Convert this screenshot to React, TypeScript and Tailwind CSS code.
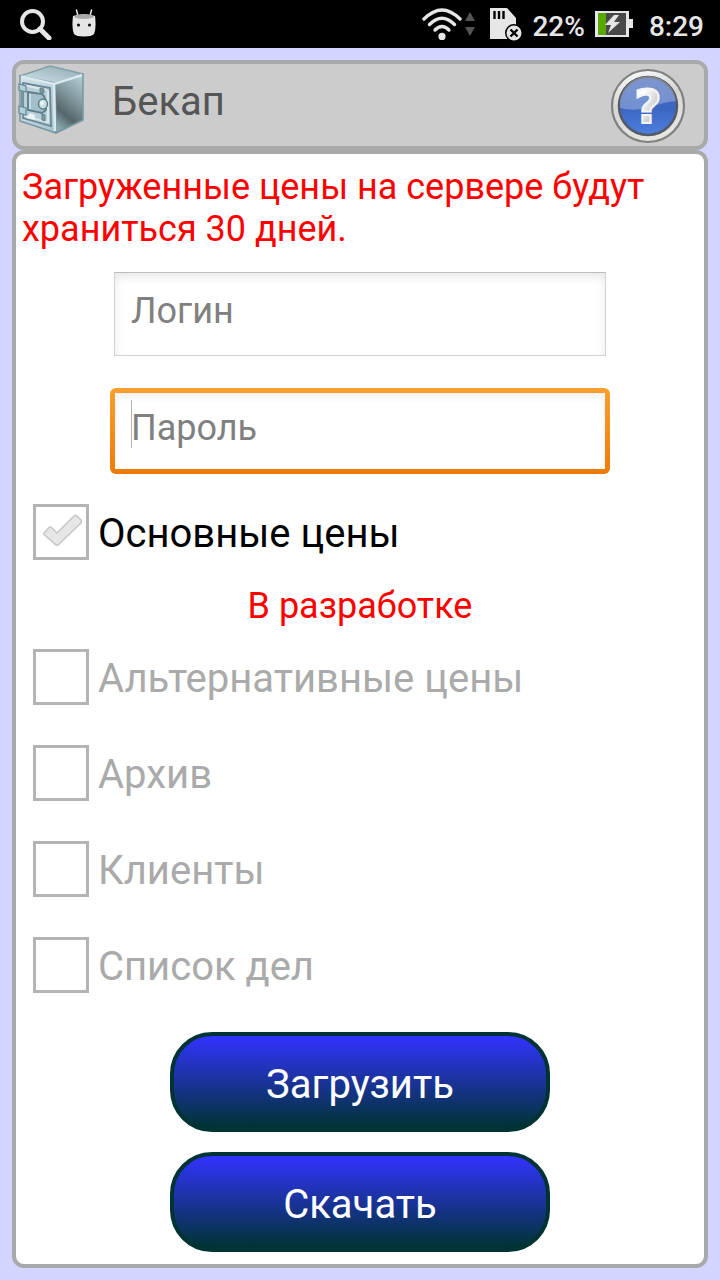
import { useState } from 'react';

interface PriceOption {
  id: string;
  label: string;
}

const upcomingOptions: PriceOption[] = [
  { id: 'alternative', label: 'Альтернативные цены' },
  { id: 'archive', label: 'Архив' },
  { id: 'clients', label: 'Клиенты' },
  { id: 'todo', label: 'Список дел' },
];

function StatusBar() {
  return (
    <div className="h-12 bg-black flex items-center justify-between pl-5 pr-4 text-[#e6e6e6]">
      <div className="flex items-center gap-5">
        <svg className="w-8 h-8" viewBox="0 0 32 32" fill="none" stroke="currentColor">
          <circle cx="12.5" cy="13.5" r="10.5" strokeWidth="4" />
          <path d="M20 21 L29 30" strokeWidth="5" strokeLinecap="round" />
        </svg>
        <svg className="w-6 h-8" viewBox="0 0 24 32">
          <path d="M6 8 L4.5 2 M18 8 L19.500 2" stroke="#e6e6e6" strokeWidth="1.500" strokeLinecap="round" />
          <path d="M1 8 Q12 5 23 8 Q24.500 20 22 26 Q20 28.500 12 28.500 Q4 28.500 2 26 Q-.5 20 1 8Z" fill="#e6e6e6" />
          <ellipse cx="12" cy="8.500" rx="10" ry="2.500" fill="#aaa" />
          <circle cx="6.500" cy="17" r="1.600" fill="#111" />
          <circle cx="17.500" cy="17" r="1.600" fill="#111" />
        </svg>
      </div>
      <div className="flex items-center">
        <svg className="w-[54px] h-8" viewBox="0 0 54 32" fill="none" stroke="#e6e6e6" strokeWidth="3.400" strokeLinecap="round">
          <path d="M2 11 Q20 -7 38 11" />
          <path d="M7.500 16.500 Q20 4 32.500 16.500" />
          <path d="M13 22 Q20 15 27 22" />
          <circle cx="20" cy="28.400" r="3.600" fill="#e6e6e6" stroke="none" />
          <path d="M43 13 L48 4 L53 13Z M43 19 L48 28 L53 19Z" fill="#555" stroke="none" />
        </svg>
        <svg className="w-8 h-[34px] ml-[14px]" viewBox="0 0 32 34">
          <path d="M0 1 H17 L26 11 V32 H0Z" fill="#e6e6e6" />
          <path d="M4.500 4 V12 M9 4 V12 M13.500 4 V12" stroke="#000" strokeWidth="2.400" />
          <circle cx="24" cy="26" r="9" fill="#000" />
          <circle cx="24" cy="26" r="7.500" fill="#e6e6e6" />
          <path d="M20.500 22.500 L27.500 29.500 M27.500 22.500 L20.500 29.500" stroke="#000" strokeWidth="2.400" />
        </svg>
        <span className="ml-[10px] pt-[6px] text-[28px] leading-8 font-medium">22%</span>
        <svg className="w-[38px] h-[26px] ml-[10px]" viewBox="0 0 38 26">
          <path d="M0 0 H34 V8 H38 V17 H34 V26 H0Z" fill="#e6e6e6" />
          <path d="M3 2 H31 V24 H3Z" fill="#484848" />
          <path d="M3 2 H11 V24 H3Z" fill="#59a800" />
          <path d="M19 4 L10 14 H16 L13 22 L25 11 H19 L24 4Z" fill="#e6e6e6" />
        </svg>
        <span className="ml-4 pt-[6px] text-[28px] leading-8 font-medium">8:29</span>
      </div>
    </div>
  );
}

function SafeIcon() {
  return (
    <svg className="w-[70px] h-[72px]" viewBox="0 0 70 72">
      <defs>
        <linearGradient id="safeTop" x1="0" y1="1" x2="1" y2="0">
          <stop offset="0" stopColor="#d3e4ea" />
          <stop offset="0.5" stopColor="#b0c6cd" />
          <stop offset="1" stopColor="#92abb3" />
        </linearGradient>
        <linearGradient id="safeSide" x1="0.8" y1="0" x2="0.4" y2="1">
          <stop offset="0" stopColor="#b0cbd1" />
          <stop offset="0.4" stopColor="#82999f" />
          <stop offset="0.75" stopColor="#54666b" />
          <stop offset="1" stopColor="#86a4ab" />
        </linearGradient>
        <linearGradient id="safeFront" x1="0" y1="0" x2="1" y2="1">
          <stop offset="0" stopColor="#d4e5ec" />
          <stop offset="1" stopColor="#a6c2cd" />
        </linearGradient>
      </defs>
      <path d="M3 12 L33 2 L66 10 L38 20Z" fill="url(#safeTop)" stroke="#84a0aa" strokeWidth="1.500" strokeLinejoin="round" />
      <path d="M38 19 L66 10 V56 L39 69Z" fill="url(#safeSide)" stroke="#7897a1" strokeWidth="1.500" strokeLinejoin="round" />
      <path d="M3 12 L38 19 L39 69 L3 57Z" fill="url(#safeFront)" stroke="#7896a2" strokeWidth="1.500" strokeLinejoin="round" />
      <path d="M4 12.500 L37 20 L65 11 M37 20 L38 67" fill="none" stroke="#dbeaf0" strokeWidth="2.500" />
      <path d="M6 19 L33 24 L34 62 L6 54Z" fill="#b9cfd8" stroke="#6b8894" strokeWidth="1.800" />
      <path d="M8 21.500 L30 26 M31 27 V59 M8 52 L30 58" fill="none" stroke="#dbe9ee" strokeWidth="1.800" />
      <path d="M11 28 L25 30 Q30 34 29 46 L25 49 L11 46Z" fill="#a5bfca" stroke="#5f7e8a" strokeWidth="1.800" />
      <path d="M13 30 V45" stroke="#c6dde6" strokeWidth="2" />
      <path d="M2 20 L9 22 V28 L2 26Z M2 42 L9 44 V51 L2 49Z" fill="#b5d0db" stroke="#668896" strokeWidth="1.300" />
      <path d="M5 27 V42" stroke="#7896a2" strokeWidth="2" />
      <ellipse cx="26" cy="40" rx="4.500" ry="5" fill="#c7dee7" stroke="#5f7e8a" strokeWidth="1.500" />
      <circle cx="25" cy="39" r="2" fill="#edf6f9" />
      <path d="M23 24 L27 25 V29 L23 28Z M25 50 L28 51 V57 L25 56Z" fill="#7d99a4" stroke="#62818d" />
      <path d="M9 54 L13 49 L18 51 V56Z" fill="#e8f3f6" />
    </svg>
  );
}

function HelpIcon() {
  return (
    <svg className="w-[76px] h-[76px]" viewBox="0 0 76 76">
      <defs>
        <linearGradient id="helpRing" x1="0" y1="0" x2="0.3" y2="1">
          <stop offset="0" stopColor="#ffffff" />
          <stop offset="0.5" stopColor="#d6d6d2" />
          <stop offset="1" stopColor="#e4e4e0" />
        </linearGradient>
        <linearGradient id="helpBlue" x1="0" y1="0" x2="0" y2="1">
          <stop offset="0" stopColor="#4a6dbb" />
          <stop offset="0.55" stopColor="#3c66c2" />
          <stop offset="1" stopColor="#4d80e0" />
        </linearGradient>
        <linearGradient id="helpMark" x1="0" y1="0" x2="1" y2="1">
          <stop offset="0.3" stopColor="#ffffff" />
          <stop offset="0.7" stopColor="#c4c4c4" />
          <stop offset="1" stopColor="#f0f0f0" />
        </linearGradient>
      </defs>
      <circle cx="38" cy="38" r="36" fill="url(#helpRing)" stroke="#808080" strokeWidth="2.200" />
      <circle cx="38" cy="38" r="29" fill="url(#helpBlue)" stroke="#555a66" strokeWidth="2.500" />
      <path d="M10 40 A28 28 0 0 1 66 33 Q54 34 40 39 Q24 44 10 40Z" fill="#fff" opacity="0.28" />
      <text
        x="38"
        y="55"
        textAnchor="middle"
        fontSize="47"
        fontWeight="700"
        fontFamily="DejaVu Sans, sans-serif"
        fill="url(#helpMark)"
        stroke="#f4f4f4"
        strokeWidth="2"
      >
        ?
      </text>
    </svg>
  );
}

function OptionRow({ option, checked = false, active = false }: { option: PriceOption; checked?: boolean; active?: boolean }) {
  return (
    <div className="h-24 flex items-center gap-[9px] pl-[11px]">
      <div className="relative w-14 h-14 shrink-0">
        <input
          id={option.id}
          type="checkbox"
          defaultChecked={checked}
          disabled
          className="block appearance-none w-14 h-14 border-[3px] border-[#b4b4b4] bg-white"
        />
        {checked && (
          <svg className="absolute inset-0 w-14 h-14 pointer-events-none" viewBox="0 0 56 56">
            <path
              d="M11 29 L16 23.500 Q17.500 22.500 19 24 L24 29 L41 12 Q42.500 10.500 44 12 L48 16 Q49 17.500 48 19 L25.500 40.500 Q24 42 22.500 40.500 L11 30.500 Q10.500 30 11 29Z"
              fill="#e6e6e6"
              stroke="#c6c6c6"
              strokeWidth="1.500"
            />
          </svg>
        )}
      </div>
      <label htmlFor={option.id} className={active ? 'pt-1 text-[40px] leading-12 text-black' : 'pt-1 text-[40px] leading-12 text-[#aaaaaa]'}>
        {option.label}
      </label>
    </div>
  );
}

const buttonClass =
  'block mx-auto w-[380px] max-w-full h-[100px] pt-[6px] rounded-[42px] border-4 border-[#003333] bg-linear-to-b/srgb from-[#3333ff] to-[#003333] text-[40px] leading-12 text-white';

export default function App() {
  const [login, setLogin] = useState('');
  const [password, setPassword] = useState('');

  return (
    <div className="min-h-screen flex flex-col bg-[#d3d4ff] font-[Roboto,sans-serif]">
      <StatusBar />

      <div className="flex-1 flex flex-col p-3">
        {/* Title bar */}
        <header className="h-[90px] flex items-start rounded-xl border-4 border-[#a9a9a9] bg-[#cccccc] pl-px pr-[18px]">
          <SafeIcon />
          <h1 className="flex-1 ml-[25px] pt-[14px] text-[40px] leading-12 text-[#555555]">Бекап</h1>
          <button type="button" aria-label="Помощь" className="mt-1">
            <HelpIcon />
          </button>
        </header>

        <form className="flex-1 rounded-xl border-4 border-[#a9a9a9] bg-white px-[6px] pt-3 pb-[11px]" onSubmit={(e) => e.preventDefault()}>
          <p className="text-[36px] leading-[42px] text-[#ff0000]">Загруженные цены на сервере будут храниться 30 дней.</p>

          <div className="px-[88px] mt-[22px]">
            <div className="px-1">
              <input
                type="text"
                aria-label="Логин"
                placeholder="Логин"
                value={login}
                onChange={(e) => setLogin(e.target.value)}
                className="block w-full h-[84px] px-4 pb-[6px] border border-[#d4d4d4] border-t-[#bdbdbd] bg-white shadow-[inset_0_4px_10px_#e9e9e9] text-[36px] text-black placeholder:text-[#808080] outline-none"
              />
            </div>
            <div className="relative mt-8 p-[5px] rounded-md bg-linear-to-b from-[#fa9f2c] to-[#ee7a05]">
              <input
                type="password"
                aria-label="Пароль"
                placeholder="Пароль"
                value={password}
                onChange={(e) => setPassword(e.target.value)}
                className="block w-full h-[76px] px-4 pb-[6px] bg-white shadow-[inset_0_4px_8px_#f0f0f0] text-[36px] text-black placeholder:text-[#808080] outline-none"
              />
              <span className="absolute left-[21px] top-3 w-px h-12 bg-[#b5b5b5]" />
            </div>
          </div>

          <div className="mt-[10px]">
            <OptionRow option={{ id: 'main', label: 'Основные цены' }} checked active />
            <p className="pt-1 text-center text-[36px] leading-[45px] text-[#ff0000]">В разработке</p>
            {upcomingOptions.map((option) => (
              <OptionRow key={option.id} option={option} />
            ))}
          </div>

          <div className="mt-[19px] space-y-5">
            <button type="submit" className={buttonClass}>Загрузить</button>
            <button type="button" className={buttonClass}>Скачать</button>
          </div>
        </form>
      </div>
    </div>
  );
}
